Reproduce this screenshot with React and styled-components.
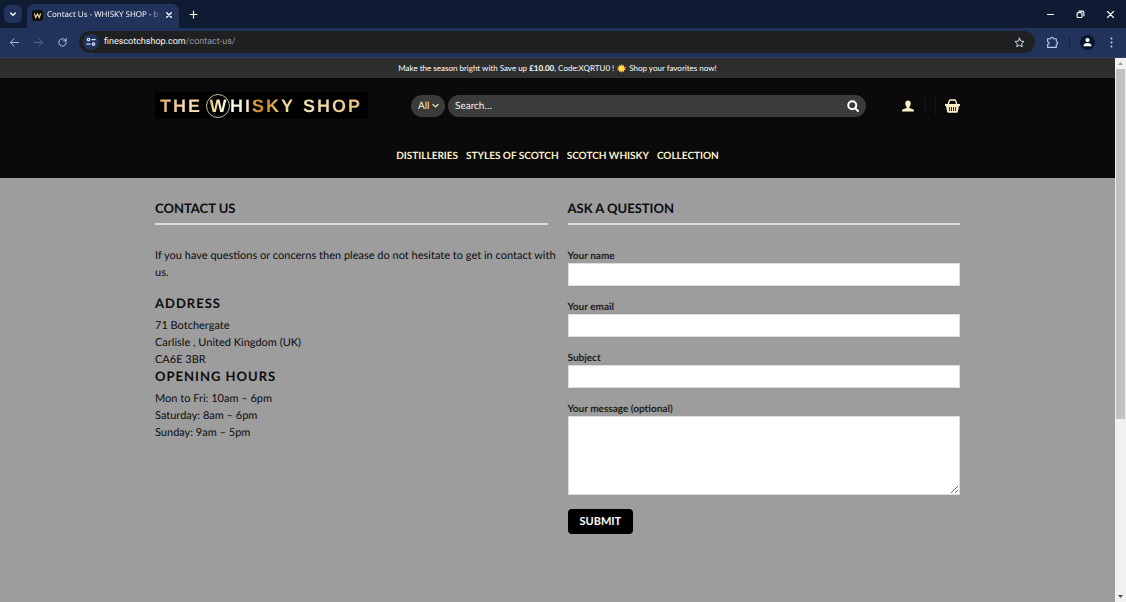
import React from "react";
import styled, { createGlobalStyle } from "styled-components";

const GlobalStyle = createGlobalStyle`
  *, *::before, *::after { box-sizing: border-box; }
  body { margin: 0; background: #9d9d9d; text-rendering: geometricPrecision; }
  button, input, select, textarea { font: inherit; color: inherit; margin: 0; text-rendering: inherit; }
  h1, h2, h3, p, address { margin: 0; font-style: normal; }
  a { color: inherit; text-decoration: none; }
`;

const cream = "#fdf0c9";

const Window = styled.div`
  display: flex;
  flex-direction: column;
  height: 100vh;
  overflow: hidden;
`;

/* Browser frame */

const TabStrip = styled.div`
  display: flex;
  align-items: center;
  flex: none;
  height: 28px;
  padding-right: 1px;
  background: #0e1b33;
  color: #fff;
  font-family: "Open Sans", "Noto Sans", sans-serif;
`;

const IconButton = styled.button`
  display: flex;
  align-items: center;
  justify-content: center;
  flex: none;
  width: ${(p) => p.$width || 24}px;
  height: ${(p) => p.$height || 20}px;
  padding: 0;
  border: 0;
  border-radius: ${(p) => p.$radius || 0}px;
  background: ${(p) => p.$background || "transparent"};
  color: ${(p) => p.$color || "#fff"};
  svg { display: block; }
`;

const TabSearch = styled(IconButton)`
  margin: 0 5px 0 4px;
`;

const Tab = styled.div`
  display: flex;
  align-items: center;
  align-self: flex-end;
  width: 152px;
  height: 24px;
  padding: 0 3px 2px 5px;
  border-radius: 7px 7px 0 0;
  background: #21335b;
`;

const TabTitle = styled.span`
  flex: 1;
  min-width: 0;
  margin-left: 4px;
  white-space: nowrap;
  font-size: 8px;
  line-height: 14px;
  mask-image: linear-gradient(90deg, #000 88%, transparent);
`;

const WindowButtons = styled.div`
  display: flex;
  margin-left: auto;
`;

const Toolbar = styled.div`
  display: flex;
  align-items: center;
  flex: none;
  height: 30px;
  padding: 0 3px 1px 2px;
  background: #21335b;
  border-bottom: 1px solid #2f3e63;
  font-family: Roboto, "Noto Sans", sans-serif;
`;

const AddressBar = styled.div`
  display: flex;
  align-items: center;
  flex: 1;
  min-width: 0;
  height: 22px;
  margin: 0 5px;
  padding: 0 6px 0 4px;
  border-radius: 11px;
  background: #1f2022;
`;

const Url = styled.span`
  flex: 1;
  margin-left: 5px;
  font-size: 9px;
  line-height: 16px;
  color: #92959b;
  b { font-weight: 400; color: #f4f4f4; }
`;

const ToolbarDivider = styled.span`
  width: 1px;
  height: 10px;
  margin: 0 5px;
  background: #141f3d;
`;

const Viewport = styled.div`
  display: flex;
  flex: 1;
  min-height: 0;
`;

const ScrollTrack = styled.div`
  display: flex;
  flex-direction: column;
  flex: none;
  width: 11px;
  background: #f1f1f1;
`;

const ScrollArrow = styled(IconButton)`
  width: 11px;
  height: 11px;
`;

const ScrollBody = styled.div`
  flex: 1;
`;

const ScrollThumb = styled.div`
  height: 67%;
  margin: 0 1px;
  background: #c1c1c1;
`;

/* Shop page */

const Page = styled.div`
  flex: 1;
  min-width: 0;
  overflow: hidden;
  background: #9d9d9d;
  color: #0c0c0c;
  font-family: Lato, "Liberation Sans", sans-serif;
`;

const Notice = styled.p`
  display: flex;
  align-items: center;
  justify-content: center;
  height: 20px;
  background: #2e2e2e;
  color: #fff;
  font-size: 8px;
  line-height: 12px;
  white-space: pre-wrap;
  svg { margin: 0 3px; }
`;

const Header = styled.header`
  background: #0a0a0a;
`;

const Container = styled.div`
  width: 100%;
  max-width: 825px;
  margin: 0 auto;
  padding: 0 10px;
`;

const HeaderMain = styled(Container)`
  display: flex;
  align-items: center;
  height: 55px;
`;

const Logo = styled.a`
  display: flex;
  align-items: center;
  flex: none;
  width: 213px;
  height: 27px;
  padding-left: 5px;
  background: #000;
  font-family: "Liberation Sans", Arial, sans-serif;
  font-size: 18px;
  font-weight: 700;
  line-height: 20px;
`;

const LogoWord = styled.span`
  margin-right: ${(p) => p.$gap || 0}px;
  letter-spacing: 2px;
  color: transparent;
  background: ${(p) => p.$fill};
  background-clip: text;
`;

const LogoRing = styled.span`
  display: flex;
  align-items: center;
  justify-content: center;
  width: 24px;
  height: 24px;
  border: 1px solid #c9bfa4;
  border-radius: 50%;
`;

const LogoInitial = styled.span`
  color: transparent;
  background: linear-gradient(100deg, #e5bc6a, #fff3cf 60%, #fff);
  background-clip: text;
`;

const SearchForm = styled.form`
  display: flex;
  flex: 1;
  gap: 3px;
  margin: 0 36px 0 43px;
  font-size: 10px;
`;

const CategoryWrap = styled.label`
  display: grid;
  align-items: center;
  flex: none;
  width: 34px;
  color: ${cream};
  select, svg { grid-area: 1 / 1; }
  svg { justify-self: end; margin-right: 6px; pointer-events: none; }
`;

const Category = styled.select`
  width: 100%;
  height: 22px;
  padding: 0 0 0 7px;
  border: 0;
  border-radius: 11px;
  background: #3b3b3b;
  appearance: none;
`;

const SearchBox = styled.div`
  display: flex;
  align-items: center;
  flex: 1;
  min-width: 0;
  height: 22px;
  padding-right: 3px;
  border-radius: 11px;
  background: #3b3b3b;
`;

const SearchInput = styled.input`
  flex: 1;
  min-width: 0;
  height: 22px;
  padding: 0 7px;
  border: 0;
  background: transparent;
  color: #fff;
  &::placeholder { color: #f2f2f2; opacity: 1; }
`;

const Account = styled.nav`
  display: flex;
  align-items: center;
  color: ${cream};
`;

const Divider = styled.span`
  width: 1px;
  height: 18px;
  margin-left: 10px;
  background: #171717;
`;

const AccountLink = styled.a`
  display: block;
  margin-left: ${(p) => p.$gap || 0}px;
  svg { display: block; }
`;

const MainNav = styled.nav`
  display: flex;
  justify-content: center;
  gap: 8px;
  height: 45px;
  padding-top: 16px;
  color: ${cream};
  font-size: 10px;
  font-weight: 700;
  line-height: 14px;
  white-space: nowrap;
`;

const Columns = styled(Container)`
  display: grid;
  grid-template-columns: 1fr 1fr;
  gap: 20px;
  padding-top: 20px;
`;

const SectionTitle = styled.h2`
  height: 27px;
  margin-bottom: 22px;
  border-bottom: 2px solid #dcdcdc;
  font-size: 13px;
  font-weight: 700;
  line-height: 21px;
`;

const Text = styled.p`
  font-size: 11px;
  line-height: 17px;
`;

/* The intro may run a little into the gap between the columns. */
const Intro = styled(Text)`
  margin: 0 -12px 14px 0;
`;

const SubTitle = styled.h3`
  margin-bottom: 5px;
  font-size: 13px;
  font-weight: 700;
  line-height: 17px;
  letter-spacing: 1px;
`;

const Form = styled.form`
  display: flex;
  flex-direction: column;
  align-items: flex-start;
  padding-top: 2px;
`;

const Field = styled.label`
  display: flex;
  flex-direction: column;
  width: 100%;
  margin-bottom: 14px;
  font-size: 10px;
  font-weight: 700;
  line-height: 14px;
  color: #1c1c1c;
`;

const Input = styled.input`
  width: 100%;
  height: 23px;
  padding: 0 8px;
  border: 1px solid #ddd;
  border-radius: 0;
  background: #fff;
`;

const Message = styled.textarea`
  display: block;
  width: 100%;
  height: 79px;
  padding: 6px 8px;
  border: 1px solid #ddd;
  background: #fff;
  resize: vertical;
`;

const Submit = styled.button`
  height: 25px;
  padding: 0 12px;
  border: 0;
  border-radius: 4px;
  background: #000;
  color: #fff;
  font-size: 11px;
  font-weight: 700;
  line-height: 14px;
`;

function Stroke({ size, children, width = 2, view = 24 }) {
  return (
    <svg width={size} height={size} viewBox={`0 0 ${view} ${view}`} fill="none" stroke="currentColor" strokeWidth={width} strokeLinecap="round" strokeLinejoin="round" aria-hidden="true">
      {children}
    </svg>
  );
}

function Sun() {
  return (
    <svg width="9" height="9" viewBox="0 0 18 18" aria-hidden="true">
      <path d="M9 0l1.8 3.4L14 1.6l-.1 3.7L18 6l-2.4 3L18 12l-4 .7.1 3.7-3.4-1.8L9 18l-1.8-3.4-3.3 1.8.1-3.7L0 12l2.4-3L0 6l4-.7-.1-3.7 3.3 1.8z" fill="#f3a51c" />
      <circle cx="9" cy="9" r="5.4" fill="#ffe04a" />
    </svg>
  );
}

function BrowserFrame() {
  return (
    <>
      <TabStrip>
        <TabSearch $width={18} $height={18} $radius={6} $background="#21335b" aria-label="Search tabs">
          <Stroke size={8} width={4}><path d="M5 9l7 7 7-7" /></Stroke>
        </TabSearch>
        <Tab>
          <svg width="11" height="11" viewBox="0 0 12 12" aria-hidden="true">
            <rect width="12" height="12" rx="3" fill="#11100e" />
            <path d="M2.6 3.8l1.500 4.400L6 4.400l1.900 3.800 1.500-4.400" fill="none" stroke="#ead3a0" strokeWidth="1.3" />
          </svg>
          <TabTitle>Contact Us - WHISKY SHOP - b</TabTitle>
          <IconButton $width={14} $height={14} aria-label="Close tab">
            <Stroke size={8} width={4}><path d="M5 5l14 14M19 5L5 19" /></Stroke>
          </IconButton>
        </Tab>
        <IconButton $width={28} aria-label="New tab">
          <Stroke size={9} width={3}><path d="M12 3v18M3 12h18" /></Stroke>
        </IconButton>
        <WindowButtons>
          <IconButton $width={30} aria-label="Minimise">
            <Stroke size={9} width={3}><path d="M4 12h16" /></Stroke>
          </IconButton>
          <IconButton $width={30} aria-label="Restore">
            <Stroke size={9} width={3}><rect x="3" y="7" width="13" height="13" rx="3" /><path d="M8 3h9a4 4 0 0 1 4 4v9" /></Stroke>
          </IconButton>
          <IconButton $width={30} aria-label="Close">
            <Stroke size={9} width={3}><path d="M4 4l16 16M20 4L4 20" /></Stroke>
          </IconButton>
        </WindowButtons>
      </TabStrip>
      <Toolbar>
        <IconButton $color="#b9c9ef" aria-label="Back">
          <Stroke size={11} width={2}><path d="M21 12H4M11 4l-8 8 8 8" /></Stroke>
        </IconButton>
        <IconButton $color="#576a96" aria-label="Forward">
          <Stroke size={11} width={2}><path d="M3 12h17M13 4l8 8-8 8" /></Stroke>
        </IconButton>
        <IconButton $color="#b9c9ef" aria-label="Reload">
          <Stroke size={11} width={2}><path d="M20 12a8 8 0 1 1-2.3-5.7L20 8.6M20 3v5.6h-5.6" /></Stroke>
        </IconButton>
        <AddressBar>
          <IconButton $width={16} $height={16} $radius={8} $background="#21335b" $color="#d5e0fb" aria-label="Site information">
            <Stroke size={10} width={3}><circle cx="6" cy="6" r="3" /><path d="M14 6h8M2 17h8" /><circle cx="18" cy="17" r="3" /></Stroke>
          </IconButton>
          <Url><b>finescotchshop.com</b>/contact-us/</Url>
          <IconButton $width={20} $color="#dfe5f2" aria-label="Bookmark this page">
            <Stroke size={11} width={2}><path d="M12 2.5l2.9 6.400 7 .8-5.200 4.700 1.400 6.900L12 17.800l-6.100 3.500 1.400-6.900L2.100 9.700l7-.8z" /></Stroke>
          </IconButton>
        </AddressBar>
        <IconButton $color="#b9c9ef" aria-label="Extensions">
          <Stroke size={13} width={2}><path d="M3 5h5.500c0-3.500 5-3.500 5 0H19v5.500c3.600 0 3.600 5 0 5V21H3v-5.500c3.600 0 3.600-5 0-5z" /></Stroke>
        </IconButton>
        <ToolbarDivider />
        <IconButton aria-label="Profile">
          <svg width="15" height="15" viewBox="0 0 15 15" aria-hidden="true">
            <circle cx="7.5" cy="7.5" r="7.500" fill="#0a1530" />
            <circle cx="7.500" cy="5" r="2.100" fill="#fff" />
            <path d="M3.400 11.300c0-4.400 8.200-4.400 8.200 0z" fill="#fff" />
          </svg>
        </IconButton>
        <IconButton $color="#c4d2f3" aria-label="Browser menu">
          <svg width="3" height="11" viewBox="0 0 3 11" fill="currentColor" aria-hidden="true">
            <circle cx="1.500" cy="1.500" r="1" /><circle cx="1.500" cy="5.500" r="1" /><circle cx="1.500" cy="9.500" r="1" />
          </svg>
        </IconButton>
      </Toolbar>
    </>
  );
}

function SiteHeader() {
  return (
    <>
      <Notice>
        <span>Make the season bright with Save up <b>£10.00</b>, Code:XQRTU0 !</span>
        <Sun />
        <span>Shop your favorites now!</span>
      </Notice>
      <Header>
        <HeaderMain>
          <Logo href="#" aria-label="The Whisky Shop">
            <LogoWord $gap={4} $fill="linear-gradient(90deg, #e3ac68, #f8dfae 60%, #efd79c)">THE</LogoWord>
            <LogoRing><LogoInitial>W</LogoInitial></LogoRing>
            <LogoWord $gap={8} $fill="linear-gradient(90deg, #fff, #f3e7c3 28%, #d0912e 42%, #cf8f2b 58%, #f2dca4 80%, #ecd08b)">HISKY</LogoWord>
            <LogoWord $fill="linear-gradient(90deg, #f3e3b8, #f0d494 60%, #e2bd74)">SHOP</LogoWord>
          </Logo>
          <SearchForm role="search">
            <CategoryWrap>
              <Category aria-label="Category" defaultValue="All"><option>All</option></Category>
              <Stroke size={7} width={4}><path d="M3 8l9 9 9-9" /></Stroke>
            </CategoryWrap>
            <SearchBox>
              <SearchInput type="search" placeholder="Search…" aria-label="Search" />
              <IconButton $width={20} type="button" aria-label="Submit search">
                <Stroke size={12} width={4}><circle cx="10.500" cy="10.500" r="8" /><path d="M16.500 16.500L22 22" /></Stroke>
              </IconButton>
            </SearchBox>
          </SearchForm>
          <Account aria-label="Account">
            <AccountLink href="#" aria-label="My account">
              <svg width="12" height="12" viewBox="0 0 24 24" fill="currentColor" aria-hidden="true">
                <path d="M12 1c-3.500 0-5.500 2.600-5.500 6 0 3 1.300 5.700 3 7v1.800c-3.500.9-9.500 2.400-9.500 5.200v2h24v-2c0-2.800-6-4.300-9.500-5.200V14c1.700-1.300 3-4 3-7 0-3.400-2-6-5.500-6z" />
              </svg>
            </AccountLink>
            <Divider />
            <Divider />
            <AccountLink href="#" $gap={9} aria-label="Basket">
              <svg width="15" height="14" viewBox="0 0 30 28" aria-hidden="true">
                <path d="M6 12l2.500-8C9 2.500 9.800 2 11 2h8c1.200 0 2 .5 2.500 2L24 12" fill="none" stroke="currentColor" strokeWidth="2.600" />
                <path d="M0 10h30v4h-2l-2.500 12c-.2 1-1 1.500-2 1.500h-17c-1 0-1.800-.5-2-1.500L2 14H0z" fill="currentColor" />
                <path d="M8.500 16l.8 8M13 16v8M17 16v8M21.500 16l-.8 8" stroke="#0a0a0a" strokeWidth="1.800" />
              </svg>
            </AccountLink>
          </Account>
        </HeaderMain>
        <MainNav aria-label="Main">
          <a href="#">DISTILLERIES</a>
          <a href="#">STYLES OF SCOTCH</a>
          <a href="#">SCOTCH WHISKY</a>
          <a href="#">COLLECTION</a>
        </MainNav>
      </Header>
    </>
  );
}

function ContactDetails() {
  return (
    <section>
      <SectionTitle>CONTACT US</SectionTitle>
      <Intro>If you have questions or concerns then please do not hesitate to get in contact with us.</Intro>
      <SubTitle>ADDRESS</SubTitle>
      <Text as="address">71 Botchergate<br />Carlisle , United Kingdom (UK)<br />CA6E 3BR</Text>
      <SubTitle>OPENING HOURS</SubTitle>
      <Text>Mon to Fri: 10am – 6pm<br />Saturday: 8am – 6pm<br />Sunday: 9am – 5pm</Text>
    </section>
  );
}

function QuestionForm() {
  return (
    <section>
      <SectionTitle>ASK A QUESTION</SectionTitle>
      <Form>
        <Field>Your name<Input type="text" name="name" /></Field>
        <Field>Your email<Input type="email" name="email" /></Field>
        <Field>Subject<Input type="text" name="subject" /></Field>
        <Field>Your message (optional)<Message name="message" /></Field>
        <Submit type="button">SUBMIT</Submit>
      </Form>
    </section>
  );
}

export default function App() {
  return (
    <Window>
      <GlobalStyle />
      <BrowserFrame />
      <Viewport>
        <Page>
          <SiteHeader />
          <Columns as="main">
            <ContactDetails />
            <QuestionForm />
          </Columns>
        </Page>
        <ScrollTrack>
          <ScrollArrow aria-label="Scroll up">
            <svg width="5" height="3" viewBox="0 0 5 3" aria-hidden="true"><path d="M0 3L2.500 0 5 3z" fill="#9a9a9a" /></svg>
          </ScrollArrow>
          <ScrollBody><ScrollThumb /></ScrollBody>
          <ScrollArrow aria-label="Scroll down">
            <svg width="5" height="3" viewBox="0 0 5 3" aria-hidden="true"><path d="M0 0L2.500 3 5 0z" fill="#505050" /></svg>
          </ScrollArrow>
        </ScrollTrack>
      </Viewport>
    </Window>
  );
}
